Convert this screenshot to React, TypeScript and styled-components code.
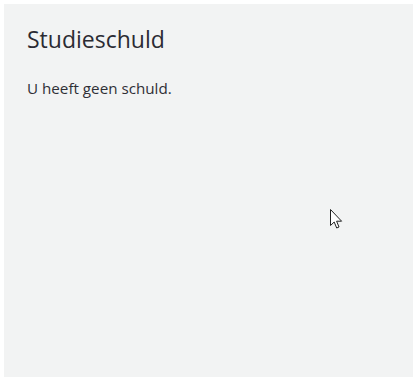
import React from "react";
import styled, { createGlobalStyle } from "styled-components";

const Global = createGlobalStyle`
  html, body { margin: 0; padding: 0; background: #ffffff; }
  body { font-family: "Open Sans", "Noto Sans", sans-serif; }
`;

const Page = styled.div`
  width: 418px;
  height: 381px;
  padding: 4px 5px 4px 4px;
  box-sizing: border-box;
`;

const Panel = styled.section`
  position: relative;
  height: 100%;
  background: #f2f3f3;
  padding: 20px 23px;
  box-sizing: border-box;
`;

const Title = styled.h2`
  margin: 0;
  font-size: 23px;
  font-weight: 400;
  line-height: 30px;
  color: #2b2b33;
`;

const Text = styled.p`
  margin: 23px 0 0;
  font-size: 15.2px;
  line-height: 22px;
  color: #2f2f36;
`;

const Cursor = styled.svg`
  position: absolute;
  left: 326px;
  top: 205px;
`;

export default function App() {
  return (
    <>
      <Global />
      <Page>
        <Panel>
          <Title>Studieschuld</Title>
          <Text>U heeft geen schuld.</Text>
          <Cursor width="13" height="21" viewBox="0 0 13 21">
            <path
              d="M0.5 0.5 L0.5 16.5 L4.2 13 L6.7 19 L9 18 L6.6 12.2 L11.6 12.2 Z"
              fill="#ffffff"
              stroke="#222"
              strokeWidth="1"
              strokeLinejoin="miter"
            />
          </Cursor>
        </Panel>
      </Page>
    </>
  );
}
